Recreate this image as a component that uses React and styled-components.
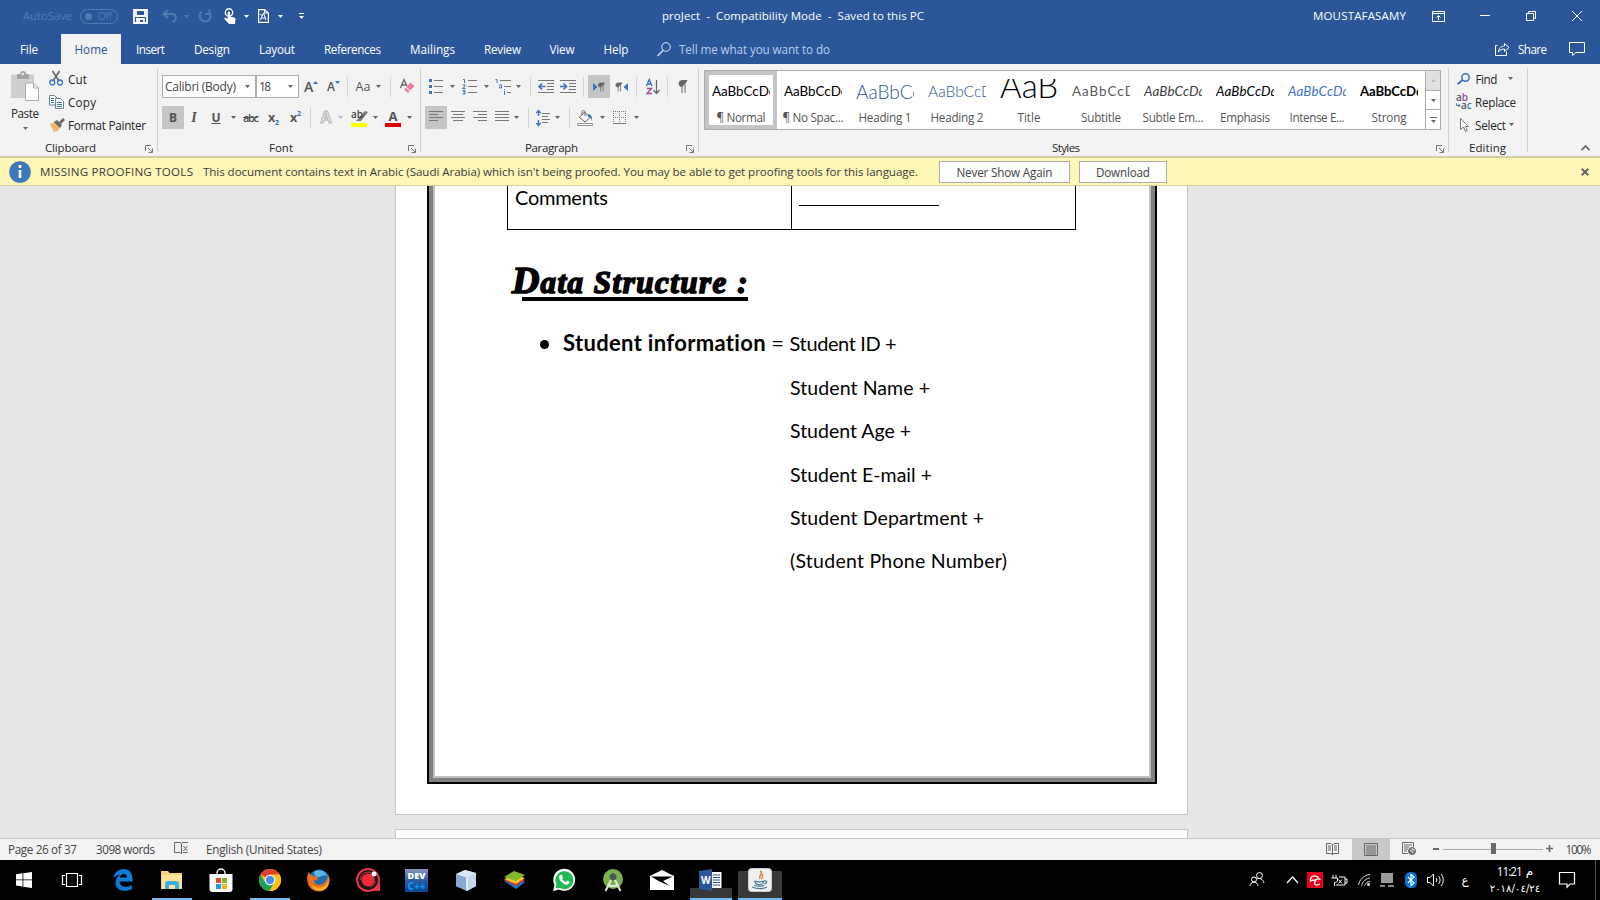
import React, { useLayoutEffect, useRef } from "react";
import styled, { createGlobalStyle, css } from "styled-components";

const ui = `"Open Sans", "Noto Sans", "DejaVu Sans", sans-serif`;
const body = `Lato, "Open Sans", sans-serif`;

const Global = createGlobalStyle`
  * { box-sizing: border-box; }
  html, body { margin: 0; padding: 0; overflow: hidden; }
  body { font: 11.5px/16px ${ui}; color: #262626; }
  svg { display: block; flex: none; overflow: visible; }
`;

const Screen = styled.div`
  width: 1600px; height: 900px; display: flex; flex-direction: column; overflow: hidden; background: #e6e6e6;
`;
const FitSpan = styled.span`
  display: inline-block; white-space: pre; flex: none;
`;

/* Text whose tracking is computed so that it fills a given width. */
function Fit({ w, children, ...rest }) {
  const ref = useRef(null);
  useLayoutEffect(() => {
    const el = ref.current;
    el.style.letterSpacing = "0px";
    el.style.marginRight = "0px";
    const natural = el.getBoundingClientRect().width;
    const gap = (w - natural) / Math.max(1, el.textContent.length - 1);
    el.style.letterSpacing = `${gap}px`;
    el.style.marginRight = `${-gap}px`;
  }, [w, children]);
  return <FitSpan ref={ref} {...rest}>{children}</FitSpan>;
}

const Slot = styled.div`
  flex: none; display: flex; align-items: center; justify-content: ${p => p.$start ? "flex-start" : "center"};
  width: ${p => p.$w}px; height: ${p => p.$h ? `${p.$h}px` : "auto"}; margin-left: ${p => p.$ml || 0}px;
  margin-top: ${p => p.$mt || 0}px;
  background: ${p => p.$bg || "transparent"};
`;
const Spacer = styled.div`flex: 1;`;

const TriSvg = styled.svg`margin-left: ${p => p.$ml || 0}px;`;
const Caret = ({ ml, color = "#666" }) => (
  <TriSvg $ml={ml} width="5" height="3" viewBox="0 0 5 3"><path d="M0 0h5L2.5 3z" fill={color} /></TriSvg>
);

/* ---------- title bar ---------- */
const TitleBar = styled.header`
  height: 34px; flex: none; display: flex; align-items: center; background: #2b579a; color: #fff; padding-bottom: 2px;
`;
const Faded = styled.div`color: #5379b3; margin-left: 23px; display: flex; align-items: center;`;
const Toggle = styled.div`
  width: 38px; height: 15px; border: 1px solid #5379b3; border-radius: 8px; margin-left: 8px;
  display: flex; align-items: center; padding-left: 4px; font-size: 10px; gap: 6px;
`;
const Knob = styled.i`width: 7px; height: 7px; border-radius: 50%; background: #5379b3;`;

/* ---------- tabs ---------- */
const TabBar = styled.nav`
  height: 30px; flex: none; display: flex; background: #2b579a; color: #fff; font-size: 11.7px;
`;
const Tab = styled.div`
  width: ${p => p.$w}px; margin-right: ${p => p.$mr || 0}px; display: flex; align-items: center; justify-content: center;
  ${p => p.$active && css`background: #f3f3f3; color: #2b579a;`}
`;
const Tell = styled.div`display: flex; align-items: center; color: #b9cdea; margin-left: 14px; gap: 8px;`;
const Share = styled.div`display: flex; align-items: center; gap: 8px;`;

/* ---------- ribbon ---------- */
const Ribbon = styled.section`
  height: 92px; flex: none; display: flex; background: #f3f3f3; padding-top: 4px; color: #262626;
`;
const Group = styled.div`
  width: ${p => p.$w}px; height: 84px; border-right: 1px solid #d0d0d0; display: flex; flex-direction: column;
`;
const GroupBody = styled.div`height: 72px; flex: none; display: flex; flex-direction: ${p => p.$col ? "column" : "row"};`;
const GroupFoot = styled.div`
  height: 16px; flex: none; display: flex; align-items: center; padding-left: ${p => p.$pl}px;
`;
const Launcher = styled.svg`margin-left: auto; margin-right: 4px; margin-top: 1px;`;
const Launch = () => (
  <Launcher width="8" height="8" viewBox="0 0 8 8" fill="none" stroke="#777">
    <path d="M.5 6V.5H6M3 3l4 4M7.5 3.5v4h-4" />
  </Launcher>
);
const ToolRow = styled.div`height: 23px; display: flex; align-items: center; margin-top: ${p => p.$mt}px; padding-left: ${p => p.$pl}px;`;
const Rule = styled.i`width: 1px; height: 20px; background: #d4d4d4; margin-left: ${p => p.$ml}px; flex: none;`;
const Combo = styled.div`
  width: ${p => p.$w}px; height: 23px; background: #fff; border: 1px solid #ababab; display: flex; align-items: center;
  justify-content: space-between; padding: 0 5px 0 2px; color: #444; font-size: 12px; flex: none;
`;
const Paste = styled.div`
  width: 49px; display: flex; flex-direction: column; align-items: center; padding: 3px 0 0 1px; font-size: 11.7px;
`;
const Command = styled.div`
  display: flex; align-items: center; height: 23px; font-size: 11.7px;
`;
const CommandList = styled.div`display: flex; flex-direction: column; margin-top: -1px;`;
const Glyph = styled.span`
  font: ${p => p.$i ? "italic " : ""}${p => p.$wt || 700} ${p => p.$size || 13}px/16px ${p => p.$serif ? `"Liberation Serif", serif` : ui};
  color: ${p => p.$c || "#555"}; text-decoration: ${p => p.$d || "none"}; white-space: nowrap;
`;
const Outline = styled.span`
  font: 700 16px/18px "Liberation Sans", sans-serif; color: #f3f3f3; -webkit-text-stroke: 1px #b5b5b5;
`;
const ColorMark = styled.div`
  display: flex; flex-direction: column; align-items: center; width: 16px; height: 19px;
  border-bottom: 4px solid ${p => p.$c}; font: 700 13px/16px ${ui}; color: #555;
`;
const Sub = styled.small`font-size: 7px; color: #2f6db5; vertical-align: ${p => p.$up ? "6px" : "-3px"}; line-height: 1px;`;

/* ---------- style gallery ---------- */
const Gallery = styled.div`
  width: 737px; height: 60px; margin: 2px 0 0 5px; border: 1px solid #ababab; background: #fff; display: flex;
`;
const StyleCell = styled.div`
  width: 72px; height: 58px; display: flex; flex-direction: column; align-items: center; flex: none; padding-top: 8px;
  ${p => p.$on && css`box-shadow: inset 0 0 0 4px #c5c5c5;`}
`;
const Preview = styled.div`
  width: 58px; height: 25px; flex: none; overflow: hidden; white-space: nowrap; color: ${p => p.$c || "#000"};
  font: ${p => p.$i ? "italic " : ""}${p => p.$wt || 400} ${p => p.$size || 13.4}px/25px ${body};
  letter-spacing: ${p => p.$ls || 0}px; display: flex; align-items: center; padding-bottom: ${p => p.$lift || 0}px;
`;
const StyleName = styled.div`color: #555; font-size: 11.7px; height: 16px; margin-top: 5px; display: flex; justify-content: center; width: 72px;`;
const ScrollCol = styled.div`width: 15px; margin-left: auto; display: flex; flex-direction: column;`;
const ScrollBtn = styled.div`
  flex: 1; border-left: 1px solid #ababab; border-bottom: ${p => p.$last ? 0 : 1}px solid #ababab; background: ${p => p.$off ? "#e1e1e1" : "#fff"};
  display: flex; align-items: center; justify-content: center;
`;

/* ---------- message bar ---------- */
const Message = styled.section`
  height: 30px; flex: none; background: #fcf7b6; border-top: 2px solid #d5d0a0; border-bottom: 1px solid #d8d39c;
  display: flex; align-items: center; padding-left: 9px; color: #3c3c3c; font-size: 11.6px;
`;
const MsgButton = styled.button`
  width: ${p => p.$w}px; height: 22px; margin: 0 0 0 ${p => p.$ml}px; padding: 0; border: 1px solid #ababab; background: #fdfdfd; color: #444;
  font: 11.7px/16px ${ui}; display: flex; align-items: center; justify-content: center;
`;

/* ---------- document ---------- */
const Canvas = styled.main`height: 652px; flex: none; overflow: hidden; background: #e6e6e6; padding-left: 395px;`;
const Page = styled.article`
  width: 793px; height: 629px; background: #fff; border: 1px solid #c6c6c6; border-top: 0; padding: 0 30px 0 31px;
`;
const NextPage = styled.div`width: 793px; height: 20px; margin-top: 14px; border: 1px solid #c6c6c6; background: #fff;`;
const Frame = styled.div`
  width: 730px; height: 598px; border: 2px solid #000; border-top: 0; padding-left: 78px;
  box-shadow: inset 4px 0 #808080, inset -4px 0 #808080, inset 0 -4px #808080, inset 6px 0 #c0c0c0, inset -6px 0 #c0c0c0, inset 0 -6px #c0c0c0;
`;
const Table = styled.div`
  display: grid; grid-template-columns: 283px 284px; width: 569px; height: 44px;
  border: 1px solid #000; border-top: 0; font: 20px/22px ${body}; color: #000;
`;
const Cell = styled.div`padding: 0 0 0 7px; & + & { border-left: 1px solid #000; }`;
const Blank = styled.div`width: 140px; height: 20px; border-bottom: 1px solid #000;`;
const Heading = styled.h1`
  margin: 34px 0 0 5px; width: 244px; height: 45px; font: italic 700 31px/44px "Liberation Serif", serif; color: #000;
  display: flex; align-items: baseline;
`;
const Underlined = styled.span`
  display: flex; align-items: baseline; height: 37px; -webkit-text-stroke: 1.6px #000;
  border-bottom: 4px solid #000; margin-left: 10px; width: 226px; line-height: 38px;
`;
const Swash = styled.span`font-size: 38px; line-height: 30px; margin-left: -10px; margin-right: 1px;`;
const Item = styled.div`
  display: flex; align-items: center; height: 30px; margin: 19px 0 0 33px; font: 20px/30px ${body}; color: #000;
`;
const Dot = styled.i`width: 9px; height: 9px; border-radius: 50%; background: #000; margin-right: 14px; margin-top: 2px;`;
const Strong = styled.b`font-size: 22px;`;
const Equals = styled.span`font-size: 22px; width: 12px; margin: 0 6px; display: flex; justify-content: center;`;
const Lines = styled.div`display: flex; flex-direction: column; padding-left: 283px; padding-top: 8px; font: 19.5px/43.3px ${body}; color: #000;`;
const Line = styled.div`height: 43.3px;`;

/* ---------- status bar ---------- */
const Status = styled.footer`
  height: 22px; flex: none; display: flex; align-items: center; background: #f3f3f3; border-top: 1px solid #c6c6c6; padding: 0 0 2px 8px; color: #444; font-size: 11.7px;
`;
const Track = styled.div`
  width: 100px; height: 14px; margin-left: 4px; display: flex; align-items: center; justify-content: center;
  background: linear-gradient(#aaa, #aaa) 0 7px / 100% 1px no-repeat;
`;
const Thumb = styled.i`width: 5px; height: 11px; background: #6a6a6a;`;

/* ---------- taskbar ---------- */
const Taskbar = styled.div`height: 40px; flex: none; display: flex; background: #000; color: #fff;`;
const TaskButton = styled.div`
  width: 49px; height: 40px; display: flex; align-items: center; justify-content: center; flex: none;
  background: ${p => p.$bar ? `linear-gradient(#76b9ed, #76b9ed) 50% 100% / ${p.$bar}px 2px no-repeat` : "none"}
    ${p => p.$shade ? `, linear-gradient(#383838, #383838) 50% 100% / ${p.$bar}px ${p.$shade}px no-repeat` : ""};
`;
const Clock = styled.div`
  width: 60px; margin-left: 13px; display: flex; flex-direction: column; align-items: center; padding-top: 2px; direction: ltr;
`;
const Time = styled.div`font: 11.7px/18px "Open Sans", "DejaVu Sans", sans-serif; display: flex; gap: 3px;`;
const Arabic = styled.span`font: ${p => p.$size || 12}px/18px "DejaVu Sans", sans-serif;`;
const DevBadge = styled.div`
  width: 23px; height: 23px; background: linear-gradient(#8b93bd, #2c5ba5 50%, #05468f); color: #fff;
  display: flex; flex-direction: column; align-items: center; font: 800 9px/13px ${ui};
`;
const DevSub = styled.span`color: #0a95f5; font: 800 10px/9px ${ui};`;

const S = ({ w = 16, h = 16, children, ...r }) => (
  <svg width={w} height={h} viewBox={`0 0 ${w} ${h}`} fill="none" {...r}>{children}</svg>
);

const lineIcon = (rows) => (
  <S w={14} h={13} stroke="#777">{rows.map(([a, b], i) => <path key={i} d={`M${a} ${0.5 + i * 3}H${b}`} />)}</S>
);

const styles = [
  { n: "¶ Normal", w: 49, on: true },
  { n: "¶ No Spac...", w: 61 },
  { n: "Heading 1", w: 53, c: "#2e5597", size: 19, wt: 300 },
  { n: "Heading 2", w: 53, c: "#2e5597", size: 15.5, wt: 300 },
  { n: "Title", w: 23, size: 33, wt: 300, lift: 12 },
  { n: "Subtitle", w: 40, c: "#5a5a5a", ls: 1 },
  { n: "Subtle Em...", w: 61, c: "#404040", i: true, ls: 0.15 },
  { n: "Emphasis", w: 50, i: true, ls: 0.15 },
  { n: "Intense E...", w: 55, c: "#4472c4", i: true, ls: 0.15 },
  { n: "Strong", w: 35, wt: 700, size: 13.2, ls: -0.1 },
];

const tabs = [["File", 58, 18, 3], ["Home", 60, 33], ["Insert", 59, 29], ["Design", 64, 36], ["Layout", 66, 36], ["References", 85, 57], ["Mailings", 75, 45], ["Review", 65, 37], ["View", 54, 25], ["Help", 54, 25]];

function TitleRow() {
  return (
    <TitleBar>
      <Faded><Fit w={49}>AutoSave</Fit><Toggle><Knob /><Fit w={14}>Off</Fit></Toggle></Faded>
      <Slot $w={15} $ml={15}>
        <S w={15} h={15}><path d="M1 1h13v13H1zM3 1v6h9V1M4 14v-4h7v4" stroke="#fff" strokeWidth="1.8" /><path d="M5 11h2v3H5z" fill="#fff" /></S>
      </Slot>
      <Slot $w={16} $ml={14}><S w={16} h={14}><path d="M6 1L1.5 5 6 9M2 5h8c5 0 5 7 0 8" stroke="#5379b3" strokeWidth="2" /></S></Slot>
      <Caret ml={6} color="#5379b3" />
      <Slot $w={14} $ml={9}><S w={14} h={14}><path d="M4 2.5A5.5 5.5 0 1 0 11 3M11.500 .5V5H7.500" stroke="#5379b3" strokeWidth="2" /></S></Slot>
      <Slot $w={12} $ml={12}><S w={12} h={16}><circle cx="5" cy="4.500" r="3.700" stroke="#fff" strokeWidth="1.400" /><path d="M3.700 4.500c0-1.500 2.400-1.500 2.400 0v4l4 1c1 .2 1.500 1 1.400 2l-.6 4.500H5L.5 11c-.5-1 .8-1.700 1.600-1l1.600 1z" fill="#fff" /></S></Slot>
      <Caret ml={8} color="#fff" />
      <Slot $w={11} $ml={9}><S w={11} h={14}><path d="M.6.6h6L10.400 4v9.400H.6zM6.500.6V4h4" stroke="#fff" strokeWidth="1.200" /><path d="M2.500 11l3-7 2.500 7M3.500 9h4M2 5l2 1.500" stroke="#fff" /></S></Slot>
      <Caret ml={9} color="#fff" />
      <Slot $w={5} $ml={16}><S w={5} h={6}><path d="M0 .5h5" stroke="#fff" /><path d="M0 3h5L2.500 6z" fill="#fff" /></S></Slot>
      <Slot $w={262} $ml={358} $start><Fit w={262}>{"proJect  -  Compatibility Mode  -  Saved to this PC"}</Fit></Slot>
      <Slot $w={93} $ml={389}><Fit w={93}>MOUSTAFASAMY</Fit></Slot>
      <Slot $w={13} $ml={26}><S w={13} h={11} stroke="#fff"><path d="M.5.5h12v10H.5zM.5 2.500h12M6.500 9V4.500M4.500 6.500l2-2 2 2" /></S></Slot>
      <Slot $w={10} $ml={35}><S w={10} h={2}><path d="M0 .5h10" stroke="#fff" /></S></Slot>
      <Slot $w={10} $ml={36}><S w={10} h={10} stroke="#fff"><path d="M.5 2.500h7v7h-7zM2.500 2.500v-2h7v7h-2" /></S></Slot>
      <Slot $w={10} $ml={36}><S w={10} h={10} stroke="#fff"><path d="M0 0l10 10M10 0L0 10" /></S></Slot>
    </TitleBar>
  );
}

function Tabs() {
  return (
    <TabBar>
      {tabs.map(([t, w, tw, mr]) => <Tab key={t} $w={w} $mr={mr} $active={t === "Home"}><Fit w={tw}>{t}</Fit></Tab>)}
      <Tell>
        <S w={14} h={15} stroke="#dbe5f4"><circle cx="9" cy="5" r="4.300" /><path d="M6 8.500L.5 14" strokeWidth="1.300" /></S>
        <Fit w={151}>Tell me what you want to do</Fit>
      </Tell>
      <Spacer />
      <Share>
        <S w={15} h={14} stroke="#fff"><path d="M2.500 3.500h-2v10h11v-4M3.500 10c0-4 3-6 6-6V1.500L14 5.500 9.500 9.500V7c-3 0-4.500 1-6 3z" /></S>
        <Fit w={29}>Share</Fit>
      </Share>
      <Slot $w={16} $ml={22}><S w={16} h={14} stroke="#fff"><path d="M.5.5h15v10H7L3.500 13.500v-3h-3z" /></S></Slot>
      <Slot $w={15} />
    </TabBar>
  );
}

function Clipboard() {
  return (
    <Group $w={158}>
      <GroupBody>
        <Paste>
          <S w={30} h={31}><path d="M1 3.500h23V27H1z" fill="#cfcfcf" /><path d="M7 3h3a3 3 0 0 1 6 0h3v5H7z" fill="#a5a5a5" /><circle cx="12.700" cy="3" r="1.200" fill="#f3f3f3" /><path d="M15.500 12h8l5 5v12.500h-13zM23.500 12v5h5" fill="#fff" stroke="#a9a9a9" /></S>
          <Slot $w={28} $h={16} $mt={3}><Fit w={28}>Paste</Fit></Slot>
          <Slot $w={5} $h={3} $mt={6}><Caret /></Slot>
        </Paste>
        <CommandList>
          <Command><S w={14} h={15}><path d="M3.500 0l6.500 10M10.500 0L4 10" stroke="#666" strokeWidth="1.600" /><circle cx="3.300" cy="11.500" r="2.500" stroke="#3e74b8" strokeWidth="1.300" /><circle cx="11" cy="11.500" r="2.500" stroke="#3e74b8" strokeWidth="1.300" /></S><Slot $w={19} $ml={5} $start><Fit w={19}>Cut</Fit></Slot></Command>
          <Command><S w={15} h={14}><path d="M.5.5h5L8 3v7H.5z" fill="#fff" stroke="#6d7f96" /><path d="M6.500 3.500h5l3 3v7h-8z" fill="#fff" stroke="#6d7f96" /><path d="M2 3.500h3M2 5.500h3M2 7.500h3M8 7.500h5M8 9.500h5M8 11.500h5" stroke="#3e74b8" /></S><Slot $w={28} $ml={4} $start><Fit w={28}>Copy</Fit></Slot></Command>
          <Command><S w={16} h={14}><path d="M1 6l5-2 5 5-2 4-4 1z" fill="#eeb870" /><path d="M5 4l3-2 5 5-2 3z" fill="#666" /><path d="M10 4l4-4 2 2-4 4z" fill="#666" /></S><Slot $w={78} $ml={3} $start><Fit w={78}>Format Painter</Fit></Slot></Command>
        </CommandList>
      </GroupBody>
      <GroupFoot $pl={45}><Fit w={51}>Clipboard</Fit><Launch /></GroupFoot>
    </Group>
  );
}

function FontGroup() {
  return (
    <Group $w={263}>
      <GroupBody $col>
        <ToolRow $mt={7} $pl={4}>
          <Combo $w={94}><Fit w={71}>Calibri (Body)</Fit><Caret /></Combo>
          <Combo $w={43}><Fit w={12}>18</Fit><Caret /></Combo>
          <Slot $w={14} $ml={5}><Glyph $size={14} $wt={600}>A</Glyph><S w={5} h={12}><path d="M0 3h5L2.500 0z" fill="#3e74b8" /></S></Slot>
          <Slot $w={13} $ml={9}><Glyph $size={12} $wt={600}>A</Glyph><S w={5} h={12}><path d="M0 0h5L2.500 3z" fill="#3e74b8" /></S></Slot>
          <Rule $ml={7} />
          <Slot $w={16} $ml={7}><Glyph $size={12.5} $wt={400}>Aa</Glyph></Slot><Caret ml={5} />
          <Rule $ml={9} />
          <Slot $w={15} $ml={9}><S w={15} h={15}><path d="M.5 9L4 .5 7 7M2 6h4" stroke="#666" strokeWidth="1.300" /><path d="M4 10.500l6.500-7L14.500 7 8 14z" fill="#e8819b" /><path d="M6 8.500l4 3.500" stroke="#fff" /></S></Slot>
        </ToolRow>
        <ToolRow $mt={8} $pl={4}>
          <Slot $w={22} $h={23} $bg="#c5c5c5"><Glyph $size={12}>B</Glyph></Slot>
          <Slot $w={18} $ml={1}><Glyph $size={14} $i $serif>I</Glyph></Slot>
          <Slot $w={14} $ml={6}><Glyph $size={12} $d="underline">U</Glyph></Slot><Caret ml={8} />
          <Slot $w={16} $ml={7}><Fit w={16}><Glyph $size={11} $wt={600} $d="line-through">abc</Glyph></Fit></Slot>
          <Slot $w={13} $ml={8}><Glyph $size={12.5}>x<Sub>2</Sub></Glyph></Slot>
          <Slot $w={13} $ml={9}><Glyph $size={12.5}>x<Sub $up>2</Sub></Glyph></Slot>
          <Rule $ml={8} />
          <Slot $w={14} $ml={8}><Outline>A</Outline></Slot><Caret ml={5} color="#bbb" />
          <Slot $w={16} $ml={8}><S w={17} h={18}><path d="M0 14h16v4H0z" fill="#ffff00" /><path d="M14 2l3 1-7 9H5z" fill="#777" /><text x="0" y="9" fontFamily="Open Sans" fontSize="10" fontWeight="600" fill="#444">ab</text></S></Slot><Caret ml={6} />
          <Slot $w={16} $ml={7}><ColorMark $c="#e00000">A</ColorMark></Slot><Caret ml={6} />
        </ToolRow>
      </GroupBody>
      <GroupFoot $pl={111}><Fit w={24}>Font</Fit><Launch /></GroupFoot>
    </Group>
  );
}

const Pilcrow = ({ c = "#666" }) => <path d="M4 13V1M7 13V1M9 .6H4a3 3 0 0 0 0 6z" stroke={c} fill={c} strokeWidth="1" />;

function Paragraph() {
  const b = "#3e74b8";
  return (
    <Group $w={278}>
      <GroupBody $col>
        <ToolRow $mt={7} $pl={8}>
          <Slot $w={14}><S w={14} h={15}><path d="M0 0h3v3H0zM0 6h3v3H0zM0 12h3v3H0z" fill={b} /><path d="M5 1.500h9M5 7.500h9M5 13.500h9" stroke="#777" /></S></Slot><Caret ml={7} />
          <Slot $w={15} $ml={7}><S w={15} h={15}><path d="M1 .5h1.500V4M.5 6h2.500v1.500L.5 9.500h3M.5 11.500h2.500v3.500H.5M1 13h2" stroke={b} /><path d="M6 1.500h9M6 7.500h9M6 13.500h9" stroke="#777" /></S></Slot><Caret ml={7} />
          <Slot $w={16} $ml={6}><S w={16} h={16}><path d="M.5.5H2V4M4 6h2.500v3H4.500V7.500M9.500 12v4M9.500 10v1" stroke={b} /><path d="M5 1.500h11M9 7.500h7M12 13.500h4" stroke="#777" /></S></Slot><Caret ml={5} />
          <Rule $ml={9} />
          <Slot $w={16} $ml={7}><S w={16} h={13}><path d="M0 .5h16M9 3.500h7M9 6.500h7M9 9.500h7M0 12.500h16" stroke="#777" /><path d="M7.500 6.500H1M4 3.500l-3 3 3 3" stroke={b} strokeWidth="1.600" /></S></Slot>
          <Slot $w={16} $ml={6}><S w={16} h={13}><path d="M0 .5h16M9 3.500h7M9 6.500h7M9 9.500h7M0 12.500h16" stroke="#777" /><path d="M0 6.500h6.500M3.500 3.500l3 3-3 3" stroke={b} strokeWidth="1.600" /></S></Slot>
          <Rule $ml={7} />
          <Slot $w={22} $h={23} $ml={4} $bg="#c5c5c5"><S w={13} h={10}><path d="M0 1l4.500 4L0 9z" fill={b} /><g transform="translate(4.500 .5) scale(.8 .7)"><Pilcrow /></g></S></Slot>
          <Slot $w={13} $ml={5}><S w={13} h={10}><path d="M13 1L8.500 5 13 9z" fill={b} /><g transform="translate(0 .5) scale(.8 .7)"><Pilcrow /></g></S></Slot>
          <Rule $ml={8} />
          <Slot $w={14} $ml={9}><S w={14} h={16}><path d="M.5 7L3.200.5 6 7M1.500 5h4" stroke={b} strokeWidth="1.300" /><path d="M1 9.500h4.500L1 14.500h5" stroke="#9b4f96" strokeWidth="1.400" /><path d="M10.500 1v13M7.500 11l3 3.500 3-3.500" stroke="#666" strokeWidth="1.200" /></S></Slot>
          <Rule $ml={7} />
          <Slot $w={11} $ml={9}><S w={10} h={14}><Pilcrow /></S></Slot>
        </ToolRow>
        <ToolRow $mt={8} $pl={4}>
          <Slot $w={22} $h={23} $bg="#c5c5c5">{lineIcon([[0, 14], [0, 9], [0, 14], [0, 9]])}</Slot>
          <Slot $w={14} $ml={4}>{lineIcon([[0, 14], [2, 12], [0, 14], [2, 12]])}</Slot>
          <Slot $w={14} $ml={8}>{lineIcon([[0, 14], [5, 14], [0, 14], [5, 14]])}</Slot>
          <Slot $w={14} $ml={8}>{lineIcon([[0, 14], [0, 14], [0, 14], [0, 14]])}</Slot><Caret ml={5} />
          <Rule $ml={9} />
          <Slot $w={14} $ml={7}><S w={14} h={16}><path d="M2.500 1v5M.3 3l2.200-2.500L4.700 3M2.500 10v5M.3 13l2.200 2.500L4.700 13" stroke={b} strokeWidth="1.400" /><path d="M6 3.500h8M6 6.500h6M6 9.500h8M6 12.500h6" stroke="#777" /></S></Slot><Caret ml={5} />
          <Rule $ml={9} />
          <Slot $w={16} $ml={7}><S w={16} h={16}><path d="M7.500 2L13 7.500 8 12 2.500 7.500zM5 5V2c0-2 3-2 3 0v4" stroke="#666" /><path d="M11 4c3 0 4.500 3 4 7-1-3-2-4-4-4z" fill={b} /><path d="M.5 13.500h15v2H.5z" stroke="#999" fill="#fff" /></S></Slot><Caret ml={7} />
          <Slot $w={13} $ml={8}><S w={13} h={13} stroke="#777"><path d="M.5 0v12M6.500 0v12M12.500 0v12M0 .5h13M0 6.500h13" strokeDasharray="1 1" /><path d="M0 12.500h13" /></S></Slot><Caret ml={8} />
        </ToolRow>
      </GroupBody>
      <GroupFoot $pl={104}><Fit w={53}>Paragraph</Fit><Launch /></GroupFoot>
    </Group>
  );
}

function Styles() {
  return (
    <Group $w={750}>
      <GroupBody>
        <Gallery>
          {styles.map(s => (
            <StyleCell key={s.n} $on={s.on}>
              <Preview $c={s.c} $size={s.size} $wt={s.wt} $i={s.i} $ls={s.ls} $lift={s.lift}>{s.n === "Title" ? "AaB" : s.n === "Heading 1" ? "AaBbCc" : "AaBbCcDd"}</Preview>
              <StyleName><Fit w={s.w}>{s.n}</Fit></StyleName>
            </StyleCell>
          ))}
          <ScrollCol>
            <ScrollBtn $off><S w={5} h={3}><path d="M0 3h5L2.500 0z" fill="#bbb" /></S></ScrollBtn>
            <ScrollBtn><Caret /></ScrollBtn>
            <ScrollBtn $last><S w={7} h={6}><path d="M0 .5h7" stroke="#666" /><path d="M1 3h5L3.500 6z" fill="#666" /></S></ScrollBtn>
          </ScrollCol>
        </Gallery>
      </GroupBody>
      <GroupFoot $pl={353}><Fit w={28}>Styles</Fit><Launch /></GroupFoot>
    </Group>
  );
}

function Editing() {
  return (
    <Group $w={79}>
      <GroupBody>
        <CommandList>
          <Command><Slot $w={13} $ml={8}><S w={13} h={12}><circle cx="8.500" cy="4.500" r="3.700" stroke="#3e74b8" strokeWidth="1.500" /><path d="M5.500 7L.7 11.300" stroke="#3e74b8" strokeWidth="2" /></S></Slot><Slot $w={23} $ml={5}><Fit w={22}>Find</Fit></Slot><Caret ml={10} /></Command>
          <Command><Slot $w={16} $ml={7}><S w={16} h={16}><text x="0" y="6.500" fontFamily="Open Sans" fontSize="10" fontWeight="600" fill="#555">a<tspan fill="#9b4f96">b</tspan></text><text x="5" y="15" fontFamily="Open Sans" fontSize="10" fontWeight="600" fill="#555">a<tspan fill="#3e74b8">c</tspan></text><path d="M.5 9.500v2H4M2.500 10l1.500 1.500L2.500 13" stroke="#3e74b8" /></S></Slot><Slot $w={41} $ml={3}><Fit w={41}>Replace</Fit></Slot></Command>
          <Command><Slot $w={9} $ml={11}><S w={9} h={14}><path d="M.5.500v11l3-2.500 2 4.500 1.800-1-2-4H8.500z" fill="#fff" stroke="#777" /></S></Slot><Slot $w={31} $ml={6}><Fit w={31}>Select</Fit></Slot><Caret ml={3} /></Command>
        </CommandList>
      </GroupBody>
      <GroupFoot $pl={20}><Fit w={37}>Editing</Fit></GroupFoot>
    </Group>
  );
}

const RibbonEnd = styled.div`flex: 1; display: flex; align-items: flex-end; justify-content: flex-end; padding: 0 10px 5px 0;`;

function MessageBar() {
  return (
    <Message>
      <S w={22} h={22}><circle cx="11" cy="11" r="10.800" fill="#3f78b9" /><path d="M11 9v8M11 4v3" stroke="#fff" strokeWidth="2.600" /></S>
      <Slot $w={153} $ml={9}><Fit w={153}>MISSING PROOFING TOOLS</Fit></Slot>
      <Slot $w={715} $ml={10}><Fit w={715}>This document contains text in Arabic (Saudi Arabia) which isn't being proofed. You may be able to get proofing tools for this language.</Fit></Slot>
      <MsgButton $w={131} $ml={21}><Fit w={96}>Never Show Again</Fit></MsgButton>
      <MsgButton $w={88} $ml={9}><Fit w={54}>Download</Fit></MsgButton>
      <Spacer />
      <S w={8} h={8}><path d="M.7.700l6.600 6.600M7.300.700L.7 7.300" stroke="#666" strokeWidth="2" /></S>
      <Slot $w={11} />
    </Message>
  );
}

function Doc() {
  return (
    <Canvas>
      <Page>
        <Frame>
          <Table><Cell><Fit w={93}>Comments</Fit></Cell><Cell><Blank /></Cell></Table>
          <Heading><Underlined><Swash>D</Swash><Fit w={207}>ata Structure :</Fit></Underlined></Heading>
          <Item><Dot /><Strong><Fit w={203}>Student information</Fit></Strong><Equals>=</Equals><Slot $w={108} $start><Fit w={107}>Student ID +</Fit></Slot></Item>
          <Lines>
            {[["Student Name +", 140], ["Student Age +", 121], ["Student E-mail +", 142], ["Student Department +", 194], ["(Student Phone Number)", 217]].map(([t, w]) => <Line key={t}><Fit w={w}>{t}</Fit></Line>)}
          </Lines>
        </Frame>
      </Page>
      <NextPage />
    </Canvas>
  );
}

function StatusBar() {
  return (
    <Status>
      <Slot $w={69}><Fit w={69}>Page 26 of 37</Fit></Slot>
      <Slot $w={59} $ml={19}><Fit w={59}>3098 words</Fit></Slot>
      <Slot $w={15} $ml={19}><S w={15} h={13} stroke="#666"><path d="M8 2L6 .5H.5v10H6L7.500 12V2M8 .5h6M13.500 10.500H9M9.500 4l4 5M13.500 4l-4 5" /></S></Slot>
      <Slot $w={116} $ml={17}><Fit w={116}>English (United States)</Fit></Slot>
      <Spacer />
      <Slot $w={13}><S w={13} h={12} stroke="#666"><path d="M6.500 2v10M6.500 2L5 .5H.5v10H5l1.500 1 1.500-1h4.500V.5H8zM2 3h3M2 5h3M2 7h3M8 3h3M8 5h3M8 7h3" /></S></Slot>
      <Slot $w={38} $h={21} $mt={2} $ml={13} $bg="#c8c8c8"><S w={14} h={13} stroke="#666"><path d="M.5.5h13v12H.5zM2 3h10M2 5h10M2 7h10M2 9h10M2 11h10" /></S></Slot>
      <Slot $w={14} $ml={12}><S w={14} h={13} stroke="#666"><path d="M6 11.500H.5v-11h11V5M2 3h8M2 5h5M2 7h4M2 9h3" /><circle cx="10" cy="9" r="3.500" fill="#777" /><path d="M8 8l2 1 1 2M10 6l1 2h2" stroke="#eee" /></S></Slot>
      <Slot $w={6} $ml={17}><S w={6} h={2}><path d="M0 1h6" stroke="#666" strokeWidth="2" /></S></Slot>
      <Track><Thumb /></Track>
      <Slot $w={7} $ml={3}><S w={7} h={7}><path d="M0 3.500h7M3.500 0v7" stroke="#666" strokeWidth="1.600" /></S></Slot>
      <Slot $w={27} $ml={12}><Fit w={26}>100%</Fit></Slot>
      <Slot $w={8} />
    </Status>
  );
}

function Task() {
  return (
    <Taskbar>
      <Slot $w={48}><S w={16} h={16}><path fill="#fff" d="M0 2.300L6.500 1.300V7.500H0zM7.300 1.200L16 0v7.500H7.300zM0 8.300h6.500v6.200L0 13.600zM7.300 8.300H16V16l-8.700-1.300z" /></S></Slot>
      <Slot $w={48}><S w={20} h={14} stroke="#fff"><path d="M4.500.5h11v13h-11zM3 2.500H.5v9H3M17 2.500h2.500v9H17" strokeWidth="1.200" /></S></Slot>
      <Slot $w={2} />
      <TaskButton><S w={20} h={22}><path d="M0 9.500C1.500 3 6 0 11 0c6 0 9 5 8.700 12.500H6.800c0 6 7 6.800 12 3.500v4C12 23.500 2.500 22 2.500 13.500c0-4 2.500-6.500 5-7.500C4.500 6 1.500 7.500 0 9.500zM7 8.500h7C14 3.500 7.500 4 7 8.500z" fill="#0b7bd8" fillRule="evenodd" /></S></TaskButton>
      <TaskButton $bar={40}><S w={22} h={19}><path d="M0 0h7l1.500 2H21v16H0z" fill="#f5d375" /><path d="M1 4h20v14H1z" fill="#fbe49a" /><path d="M4 18v-5a3 3 0 0 1 3-3h8a3 3 0 0 1 3 3v5h-4v-4H8v4z" fill="#39b0df" /></S></TaskButton>
      <TaskButton><S w={24} h={23}><path d="M8 6V4a4 4 0 0 1 8 0v2" stroke="#fff" strokeWidth="1.300" /><path d="M.5 5h23v15c0 2-1 3-3 3h-17c-2 0-3-1-3-3z" fill="#fff" /><path d="M7 9h5v5H7z" fill="#e14b28" /><path d="M13 9h5v5h-5z" fill="#7cb82f" /><path d="M7 15h5v5H7z" fill="#1b9fe0" /><path d="M13 15h5v5h-5z" fill="#f5b912" /></S></TaskButton>
      <TaskButton $bar={40}><S w={22} h={22}><circle cx="11" cy="11" r="11" fill="#fbc116" /><path d="M11 11L1.500 5.500A11 11 0 0 1 20.500 5.500z" fill="#df4131" /><path d="M1.500 5.500A11 11 0 0 0 10.500 22l5-8.500L6 13z" fill="#20a05a" /><path d="M20.500 5.500H11v5.500l4.500 2.500-5 8.500A11 11 0 0 0 20.500 5.500z" fill="#fbc116" /><circle cx="11" cy="11" r="5.200" fill="#fff" /><circle cx="11" cy="11" r="4.200" fill="#4c8bf5" /></S></TaskButton>
      <TaskButton><S w={23} h={23}><circle cx="12" cy="11" r="10.500" fill="#1f6cae" /><path d="M7 3c5-4 12-1 13 4-3-2-5 0-8 1-3 0-5-1-5-5z" fill="#5cb5e4" /><path d="M2 3C-1 8-.5 15 4 19.500c5 4.500 13 4 17-2 2-4 2-8 0-12 0 5-3 9-7 10-4 1-7-1-7-4l4-1-1-3C6 7.500 3 6 2 3z" fill="#e8701f" /><path d="M20 5c3 6 0 12-6 13.500C10 19.500 6 18 4 15c1 4 6 7.500 11 6.500 6-1.500 9-9 5-16.500z" fill="#f9b32b" /></S></TaskButton>
      <TaskButton><S w={24} h={24}><circle cx="12" cy="12" r="11" fill="#191919" stroke="#e4364c" strokeWidth="2" /><circle cx="12" cy="12" r="6.500" fill="#f02b35" /><path d="M4.500 12a7.500 7.500 0 0 1 12.500-6M19.500 13a8 8 0 0 1-5.500 6" stroke="#d52c3c" /><path d="M16 23h8v-8z" fill="#e4364c" /><circle cx="18" cy="6" r="2.500" fill="#fff" /></S></TaskButton>
      <TaskButton><DevBadge>DEV<DevSub>C++</DevSub></DevBadge></TaskButton>
      <TaskButton><S w={22} h={22}><path d="M1 5l9-4 11 3v13l-9 5-11-5z" fill="#9ab9df" /><path d="M1 5l9-4 11 3-9 5z" fill="#d8e7f5" /><path d="M12 9l9-5v13l-9 5z" fill="#c4d7ec" /><path d="M12 9v13L1 17V5z" fill="#89a9d2" /><path d="M12 9v12" stroke="#f3faff" strokeWidth="1.500" /></S></TaskButton>
      <TaskButton><S w={22} h={18}><path d="M0 10l11-4 10 5-9 7z" fill="#1678c8" /><path d="M0 9l11-4 10 4-9 6z" fill="#d93132" /><path d="M0 8l11-4 10 3-9 6z" fill="#f5c52a" /><path d="M0 6l10-6 11 4-9 6z" fill="#83b928" /></S></TaskButton>
      <TaskButton><S w={22} h={23}><path d="M0 22l1.500-6A11 11 0 1 1 6 20.500z" fill="#fff" /><path d="M2.500 19.500l1-4A9 9 0 1 1 7 19z" fill="#20b953" /><path d="M6.500 6.500c2-2 3 0 3.500 1.500L9 9.500c1 2 2.500 3 4 3.500l1.500-1.500c3 1.500 2.500 2 1 3.500C12 18 4 10 6.500 6.500z" fill="#fff" /></S></TaskButton>
      <TaskButton><S w={22} h={23}><circle cx="11" cy="10" r="10" fill="#7daf4e" /><circle cx="11" cy="8" r="3.500" fill="#455b51" /><path d="M11 4v4" stroke="#455b51" strokeWidth="2" /><path d="M9 11L3.500 22M13 11l5.500 11M6.500 16c3 1.500 6 1.500 9 0" stroke="#dce7d2" strokeWidth="2" /></S></TaskButton>
      <TaskButton><S w={24} h={20}><path d="M0 6l12-6 12 6v14H0z" fill="#fff" /><path d="M1 6.500h21.500L13 11l7 5-10.500-4.500z" fill="#000" /></S></TaskButton>
      <TaskButton $bar={42} $shade={12}><S w={23} h={22}><path d="M0 2l13-2v22L0 20z" fill="#2b579a" /><path d="M13 3h9.500v16H13z" fill="#fff" /><path d="M14 6h7M14 8.500h7M14 11h7M14 13.500h7M14 16h7" stroke="#2b579a" /><text x="2" y="15" fontFamily="Open Sans" fontWeight="700" fontSize="10" fill="#fff">W</text></S></TaskButton>
      <TaskButton $bar={44} $shade={29}><S w={24} h={24}><rect x=".5" y=".5" width="23" height="23" rx="3" fill="#eef1f3" stroke="#c8ced3" /><path d="M12 3c4 2-2 4 0 8M14 6c2 1-1 3 0 5" stroke="#e78132" strokeWidth="1.400" /><path d="M6 13c4 1 8 1 10 0M7 13c0 5 8 5 9 0M16 13c4-1 3 3 0 3M4 19c5 2 11 2 15 0M6 17.500c4 1 7 1 10 0" stroke="#4e7896" strokeWidth="1.200" /></S></TaskButton>
      <Spacer />
      <S w={48} h={40} stroke="#fff"><g transform="translate(2 12)"><circle cx="9.500" cy="3.500" r="3" /><circle cx="4" cy="7.500" r="2.500" /><path d="M0 14c0-5 8-5 8 0M6.500 7c3-1.500 6.500 0 7.500 4" /></g><path d="M39 23l5.500-6 5.500 6" strokeWidth="1.300" /></S>
      <Slot $w={16} $ml={11}><S w={16} h={16}><path d="M0 0h16v16H0z" fill="#e2001a" /><path d="M3.500 9C3 3.500 9 2 12.500 7c-2-.5-3 0-4 1-1.500 0-3 0-5 1zM9 8l-1.500 3c-.5 2 3 2.500 5.500 1" stroke="#fff" strokeWidth="1.300" /></S></Slot>
      <Slot $w={16} $ml={8}><S w={16} h={11} stroke="#fff"><path d="M2 0v3M5 0v3M.5 3h6v2c0 2-1 2.500-3 2.500V11M8 2h6v8H5M14 4h2v4h-2M7.500 4.500l3.500 4M11 4.500l-3.500 4" /></S></Slot>
      <Slot $w={12} $ml={11}><S w={12} h={12} stroke="#ddd"><path d="M.5 11C2 5 6 1 12 .5M3.500 11.500C5 7 8 4.500 12 4M6.500 11.500C8 9 9 8 12 7.500" /><circle cx="10.500" cy="10.500" r="1.500" fill="#ddd" stroke="none" /></S></Slot>
      <Slot $w={14} $ml={10}><S w={14} h={14}><path d="M1 0h12v10H1z" fill="#9a9a9a" /><path d="M0 12h5v2H0zM8 12h6v2H8z" fill="#888" /></S></Slot>
      <Slot $w={12} $ml={11}><S w={12} h={16}><rect width="12" height="16" rx="5.500" fill="#0078d7" /><path d="M3 5l6 6-3 2.500v-11L9 5l-6 6" stroke="#fff" strokeWidth="1.100" /></S></Slot>
      <Slot $w={17} $ml={10}><S w={17} h={14} stroke="#fff"><path d="M.5 4.500H3L6.500 1v12L3 9.500H.5zM9 5c1 1 1 3 0 4M11.500 3c2 2 2 6 0 8M14 1c3 3 3 9 0 12" /></S></Slot>
      <Slot $w={14} $ml={14}><Arabic>ع</Arabic></Slot>
      <Clock><Time><Fit w={26}>11:21</Fit><Arabic>م</Arabic></Time><Arabic $size={10.2}>٢٠١٨/٠٤/٢٤</Arabic></Clock>
      <Slot $w={16} $ml={14}><S w={16} h={16} stroke="#fff"><path d="M.5.5h15v11.500H11L8 15.200V12H.5z" strokeWidth="1.200" /></S></Slot>
      <Slot $w={1} $ml={20} $bg="#555" />
      <Slot $w={4} />
    </Taskbar>
  );
}

export default function App() {
  return (
    <Screen>
      <Global />
      <TitleRow />
      <Tabs />
      <Ribbon>
        <Clipboard /><FontGroup /><Paragraph /><Styles /><Editing />
        <RibbonEnd><S w={9} h={6}><path d="M.5 5.200L4.500 1l4 4.200" stroke="#666" strokeWidth="1.700" /></S></RibbonEnd>
      </Ribbon>
      <MessageBar />
      <Doc />
      <StatusBar />
      <Task />
    </Screen>
  );
}
